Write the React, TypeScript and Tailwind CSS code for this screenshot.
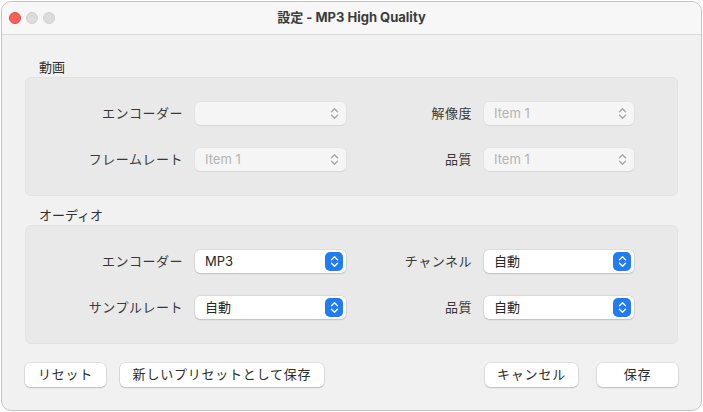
import React from 'react';

const font = { fontFamily: 'Inter, "Noto Sans CJK JP", sans-serif' };

const Stepper: React.FC<{ active?: boolean }> = ({ active }) => (
   <div className={`flex items-center justify-center w-[18px] h-[19px] rounded-[5px] ${active ? 'bg-[#1f7cf6]' : ''}`}>
      <svg width="9" height="13" viewBox="0 0 9 13" fill="none">
         <path d="M1.5 4.8 L4.5 1.8 L7.5 4.8" stroke={active ? '#ffffff' : '#a8a8a8'} strokeWidth="1.4" strokeLinecap="round" strokeLinejoin="round" />
         <path d="M1.5 8.2 L4.5 11.2 L7.5 8.2" stroke={active ? '#ffffff' : '#a8a8a8'} strokeWidth="1.4" strokeLinecap="round" strokeLinejoin="round" />
      </svg>
   </div>
);

const Select: React.FC<{ value?: string; active?: boolean }> = ({ value, active }) => (
   <div className={`flex items-center justify-between h-[23px] pl-[10px] pr-[2px] rounded-[5px] text-[13px] ${active ? 'bg-white text-[#262626] shadow-[0_0_0_0.5px_rgba(0,0,0,0.12),0_1px_1.5px_rgba(0,0,0,0.12)]' : 'bg-[#f5f5f5] text-[#b4b4b4] shadow-[0_0_0_0.5px_rgba(0,0,0,0.05),0_1px_1px_rgba(0,0,0,0.05)]'}`}>
      <span>{value}</span>
      <div className="pr-[1px]"><Stepper active={active} /></div>
   </div>
);

const Label: React.FC<{ children: React.ReactNode }> = ({ children }) => (
   <div className="text-right text-[13px] text-[#383838] tracking-[0.04em]">{children}</div>
);

const Group: React.FC<{ title: string; rows: [string, string | undefined, string, string | undefined][]; active?: boolean }> = ({ title, rows, active }) => (
   <div>
      <div className="pl-[14px] h-[17px] text-[13px] font-normal text-[#303030] leading-[17px]">{title}</div>
      <div className="mt-[1px] bg-[#e9e9e9] rounded-[6px] border border-[#e2e2e2] py-[24px] grid grid-cols-[157px_151px_114px_150px] gap-x-3 gap-y-[23px] items-center">
         {rows.map((r, i) => (
            <React.Fragment key={i}>
               <Label>{r[0]}</Label>
               <Select value={r[1]} active={active} />
               <Label>{r[2]}</Label>
               <Select value={r[3]} active={active} />
            </React.Fragment>
         ))}
      </div>
   </div>
);

const Button: React.FC<{ children: React.ReactNode; w: string }> = ({ children, w }) => (
   <button className={`${w} h-[24px] bg-white rounded-[5px] text-[13px] text-[#2b2b2b] tracking-[0.06em] shadow-[0_0_0_0.5px_rgba(0,0,0,0.15),0_1px_1.5px_rgba(0,0,0,0.15)]`}>
      {children}
   </button>
);

const App: React.FC = () => {
   return (
      <div className="w-[703px] h-[412px] bg-white p-[1px]" style={font}>
         <div className="w-[701px] h-[410px] rounded-[10px] border border-[#c4c4c4] bg-[#f1f1f1] overflow-hidden flex flex-col">
            {/* title bar */}
            <div className="relative h-[33px] shrink-0 bg-[#f7f7f7] border-b border-[#dadada] flex items-center justify-center">
               <div className="absolute left-[7px] top-[10px] flex gap-[5px]">
                  <div className="w-[12px] h-[12px] rounded-full bg-[#fe5f57] border border-[#e2463f]" />
                  <div className="w-[12px] h-[12px] rounded-full bg-[#dcdcdc] border border-[#cfcfcf]" />
                  <div className="w-[12px] h-[12px] rounded-full bg-[#dcdcdc] border border-[#cfcfcf]" />
               </div>
               <div className="text-[13px] font-bold text-[#3c3c3c]">設定 - MP3 High Quality</div>
            </div>

            {/* body */}
            <div className="flex-1 px-[23px] pt-[24px]">
               <Group
                  title="動画"
                  rows={[
                     ['エンコーダー', undefined, '解像度', 'Item 1'],
                     ['フレームレート', 'Item 1', '品質', 'Item 1'],
                  ]}
               />
               <div className="h-[11px]" />
               <Group
                  title="オーディオ"
                  active
                  rows={[
                     ['エンコーダー', 'MP3', 'チャンネル', '自動'],
                     ['サンプルレート', '自動', '品質', '自動'],
                  ]}
               />
               <div className="mt-[19px] flex items-center">
                  <Button w="w-[81px]">リセット</Button>
                  <div className="w-[14px]" />
                  <Button w="w-[204px]">新しいプリセットとして保存</Button>
                  <div className="flex-1" />
                  <Button w="w-[93px]">キャンセル</Button>
                  <div className="w-[19px]" />
                  <Button w="w-[81px]">保存</Button>
               </div>
            </div>
         </div>
      </div>
   );
};

export default App;
